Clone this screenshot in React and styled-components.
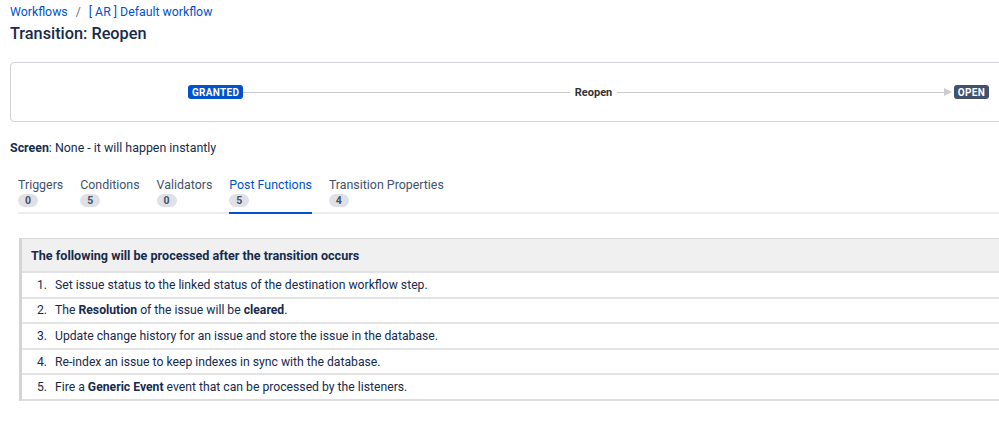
import React from "react";
import styled, { createGlobalStyle } from "styled-components";

const GlobalStyle = createGlobalStyle`
  body {
    margin: 0;
    background: #fff;
    overflow: hidden;
    font-family: Roboto, Inter, "Liberation Sans", sans-serif;
    color: #172b4d;
  }
`;

const Page = styled.div`
  width: 1100px;
  padding: 4px 0 0 10px;
`;

const Breadcrumbs = styled.nav`
  display: flex;
  align-items: center;
  gap: 8px;
  font-size: 12.3px;
  line-height: 16px;
`;

const Crumb = styled.a`
  color: #0052cc;
  text-decoration: none;
`;

const Sep = styled.span`
  color: #6b778c;
`;

const Title = styled.h1`
  margin: 3px 0 0;
  font-size: 16.3px;
  font-weight: 500;
  line-height: 22px;
`;

const Diagram = styled.div`
  margin-top: 17px;
  width: 1010px;
  height: 60px;
  box-sizing: border-box;
  border: 1px solid #cfd2d6;
  border-radius: 4px;
  display: flex;
  align-items: center;
  padding: 0 30px 0 177px;
`;

const Lozenge = styled.span`
  display: inline-flex;
  align-items: center;
  height: 14px;
  padding: 0 4px;
  border-radius: 3px;
  background: ${(p) => p.$bg};
  color: #fff;
  font-size: 10px;
  font-weight: 700;
  letter-spacing: 0.3px;
  text-transform: uppercase;
`;

const Line = styled.span`
  flex: 1;
  height: 1px;
  background: #cccccc;
`;

const TransitionName = styled.span`
  padding: 0 5px;
  font-size: 11px;
  font-weight: 700;
  color: #333;
`;

const Arrow = styled.span`
  width: 0;
  height: 0;
  border-top: 4px solid transparent;
  border-bottom: 4px solid transparent;
  border-left: 8px solid #cccccc;
  margin-right: 2px;
`;

const ScreenInfo = styled.p`
  margin: 18px 0 0;
  font-size: 12.4px;
  line-height: 16px;
`;

const Tabs = styled.div`
  margin-top: 21px;
  margin-left: 8px;
  display: flex;
  gap: 17px;
  border-bottom: 2px solid #ebecf0;
  width: 1000px;
`;

const Tab = styled.div`
  display: flex;
  flex-direction: column;
  align-items: flex-start;
  padding-bottom: 5px;
  margin-bottom: -2px;
  border-bottom: 2px solid ${(p) => (p.$active ? "#0052cc" : "transparent")};
  color: ${(p) => (p.$active ? "#0052cc" : "#42526e")};
  font-size: 12.4px;
  line-height: 16px;
`;

const Badge = styled.span`
  margin-top: 1px;
  min-width: 20px;
  height: 13px;
  border-radius: 7px;
  background: #dfe1e6;
  color: #42526e;
  font-size: 10.5px;
  font-weight: 700;
  line-height: 13px;
  text-align: center;
`;

const Table = styled.div`
  margin: 24px 0 0 9px;
  width: 1020px;
  border-left: 3px solid #d4d4d4;
  border-top: 1px solid #d9d9d9;
  border-bottom: 2px solid #dedede;
`;

const Header = styled.div`
  height: 32px;
  display: flex;
  align-items: center;
  padding-left: 9px;
  background: #f0f0f0;
  font-size: 12.6px;
  font-weight: 700;
`;

const Row = styled.div`
  height: 25.6px;
  box-sizing: border-box;
  display: flex;
  align-items: center;
  font-size: 12.2px;
  border-top: 2px solid #e3e3e3;
`;

const Num = styled.span`
  width: 25px;
  text-align: right;
  margin-right: 8px;
`;

const steps = [
  <>Set issue status to the linked status of the destination workflow step.</>,
  <>
    The <b>Resolution</b> of the issue will be <b>cleared</b>.
  </>,
  <>Update change history for an issue and store the issue in the database.</>,
  <>Re-index an issue to keep indexes in sync with the database.</>,
  <>
    Fire a <b>Generic Event</b> event that can be processed by the listeners.
  </>,
];

const tabs = [
  ["Triggers", 0],
  ["Conditions", 5],
  ["Validators", 0],
  ["Post Functions", 5],
  ["Transition Properties", 4],
];

export default function App() {
  return (
    <Page>
      <GlobalStyle />
      <Breadcrumbs>
        <Crumb href="#">Workflows</Crumb>
        <Sep>/</Sep>
        <Crumb href="#">[ AR ] Default workflow</Crumb>
      </Breadcrumbs>
      <Title>Transition: Reopen</Title>

      <Diagram>
        <Lozenge $bg="#0052cc">Granted</Lozenge>
        <Line />
        <TransitionName>Reopen</TransitionName>
        <Line />
        <Arrow />
        <Lozenge $bg="#42526e">Open</Lozenge>
      </Diagram>

      <ScreenInfo>
        <b>Screen</b>: None - it will happen instantly
      </ScreenInfo>

      <Tabs>
        {tabs.map(([name, count]) => (
          <Tab key={name} $active={name === "Post Functions"}>
            {name}
            <Badge>{count}</Badge>
          </Tab>
        ))}
      </Tabs>

      <Table>
        <Header>The following will be processed after the transition occurs</Header>
        {steps.map((s, i) => (
          <Row key={i}>
            <Num>{i + 1}.</Num>
            <span>{s}</span>
          </Row>
        ))}
      </Table>
    </Page>
  );
}
